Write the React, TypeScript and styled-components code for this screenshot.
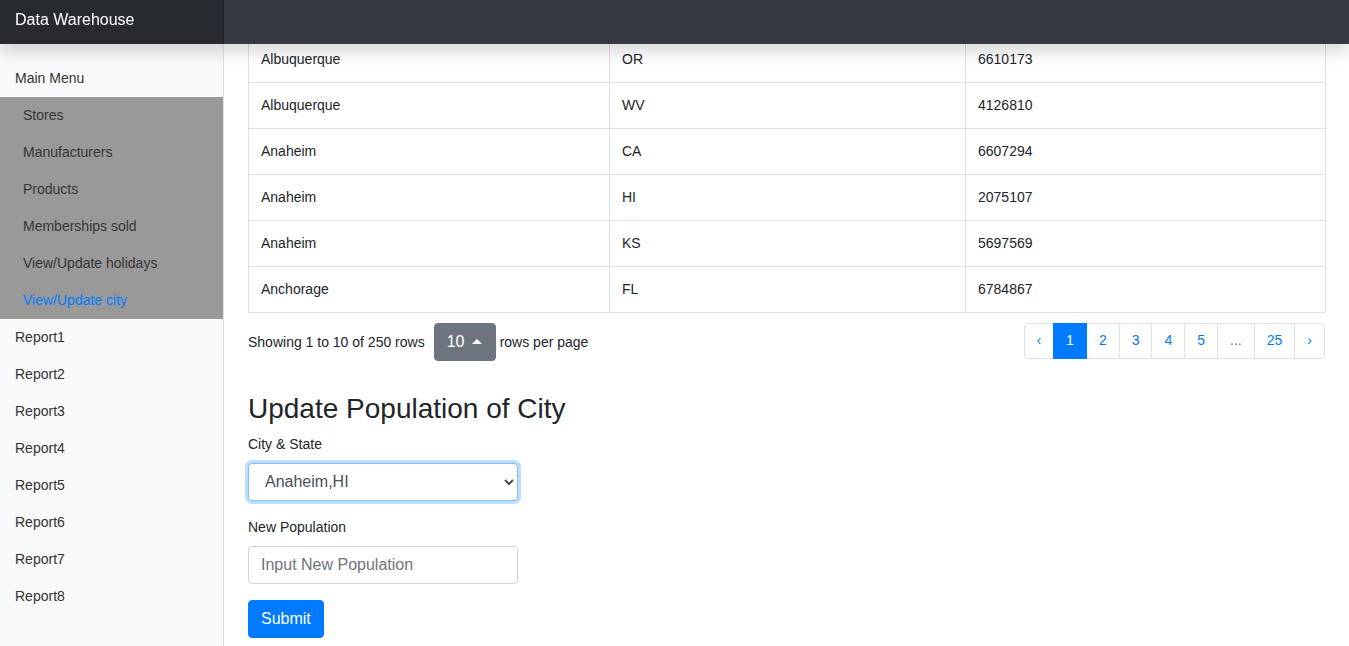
import React from "react";
import styled, { createGlobalStyle } from "styled-components";

const Global = createGlobalStyle`
  html, body { margin: 0; padding: 0; }
  body {
    font-family: "Liberation Sans", Arial, sans-serif;
    font-size: 16px;
    line-height: 1.5;
    color: #212529;
    background: #fff;
    overflow: hidden;
  }
  * { box-sizing: border-box; }
`;

const Page = styled.div`
  display: flex;
  height: 100vh;
  overflow: hidden;
`;

const TopBar = styled.header`
  position: fixed;
  top: 0;
  left: 0;
  right: 0;
  height: 44px;
  display: flex;
  background: #343a40;
  box-shadow: 0 0.5rem 1rem rgba(0, 0, 0, 0.15);
  z-index: 10;
`;

const Brand = styled.div`
  width: 224px;
  height: 100%;
  display: flex;
  align-items: center;
  padding: 0 0 4px 15px;
  color: #fff;
  font-size: 16px;
  background: rgba(0, 0, 0, 0.25);
  box-shadow: inset -1px 0 0 rgba(0, 0, 0, 0.25);
`;

const Sidebar = styled.nav`
  flex: 0 0 224px;
  height: 100vh;
  background: #f8f9fa;
  border-right: 1px solid #dee2e6;
  padding-top: 60px;
  display: flex;
  flex-direction: column;
`;

const MenuItem = styled.div<{ $indent?: boolean; $active?: boolean }>`
  height: 37px;
  display: flex;
  align-items: center;
  padding-left: ${(p) => (p.$indent ? 23 : 15)}px;
  font-size: 14px;
  color: ${(p) => (p.$active ? "#007bff" : p.$indent ? "#353535" : "#333")};
`;

const SubMenu = styled.div`
  background: #999999;
  display: flex;
  flex-direction: column;
`;

const Main = styled.main`
  flex: 1;
  padding: 36px 24px 0 24px;
  min-width: 0;
`;

const Table = styled.table`
  width: 100%;
  border-collapse: collapse;
  font-size: 14px;
  table-layout: fixed;
`;

const Cell = styled.td<{ $w: number }>`
  width: ${(p) => p.$w}px;
  border: 1px solid #dee2e6;
  padding: 12px;
  line-height: 21px;
  color: #212529;
`;

const PagerRow = styled.div`
  margin-top: 10px;
  display: flex;
  align-items: center;
  justify-content: space-between;
  height: 38px;
`;

const Detail = styled.div`
  display: flex;
  align-items: center;
  font-size: 14px;
  line-height: 19px;
`;

const SizeButton = styled.button`
  margin: 0 4px 0 9px;
  height: 38px;
  padding: 0 12px 0 12px;
  width: 62px;
  border: 1px solid #6c757d;
  border-radius: 4px;
  background: #6c757d;
  color: #fff;
  font-family: inherit;
  font-size: 16px;
  display: flex;
  align-items: center;
  gap: 8px;
`;

const Caret = styled.span`
  width: 0;
  height: 0;
  border-left: 5px solid transparent;
  border-right: 5px solid transparent;
  border-bottom: 5px solid #fff;
  margin-bottom: 2px;
`;

const Pagination = styled.ul`
  display: flex;
  list-style: none;
  margin: 0;
  padding: 0;
  align-self: flex-start;
`;

const PageLink = styled.li<{ $active?: boolean; $muted?: boolean }>`
  font-size: 14px;
  line-height: 17.5px;
  padding: 8px 12px;
  margin-left: -1px;
  border: 1px solid ${(p) => (p.$active ? "#007bff" : "#dee2e6")};
  background: ${(p) => (p.$active ? "#007bff" : "#fff")};
  color: ${(p) => (p.$active ? "#fff" : p.$muted ? "#6c757d" : "#007bff")};
  position: relative;
  z-index: ${(p) => (p.$active ? 2 : 1)};
  &:first-child {
    margin-left: 0;
    padding-left: 11px;
    border-radius: 4px 0 0 4px;
  }
  &:last-child {
    border-radius: 0 4px 4px 0;
  }
`;

const Heading = styled.h3`
  margin: 31px 0 8px;
  font-size: 28px;
  font-weight: 500;
  line-height: 1.2;
  color: #212529;
`;

const FormGroup = styled.div`
  margin-bottom: 16px;
  width: 270px;
`;

const Label = styled.label`
  display: block;
  font-size: 14px;
  line-height: 21px;
  margin-bottom: 8px;
`;

const Select = styled.select`
  width: 270px;
  height: 38px;
  padding: 6px 8px 6px 12px;
  font-family: inherit;
  font-size: 16px;
  color: #495057;
  background: #fff;
  border: 1px solid #80bdff;
  border-radius: 4px;
  box-shadow: 0 0 0 3px rgba(0, 123, 255, 0.25);
  outline: none;
`;

const Input = styled.input`
  width: 270px;
  height: 38px;
  padding: 6px 12px;
  font-family: inherit;
  font-size: 16px;
  color: #495057;
  border: 1px solid #ced4da;
  border-radius: 4px;
  outline: none;
  &::placeholder {
    color: #6c757d;
  }
`;

const Submit = styled.button`
  height: 38px;
  padding: 0 12px;
  font-family: inherit;
  font-size: 16px;
  color: #fff;
  background: #007bff;
  border: 1px solid #007bff;
  border-radius: 4px;
`;

const rows: [string, string, string][] = [
  ["Albuquerque", "OR", "6610173"],
  ["Albuquerque", "WV", "4126810"],
  ["Anaheim", "CA", "6607294"],
  ["Anaheim", "HI", "2075107"],
  ["Anaheim", "KS", "5697569"],
  ["Anchorage", "FL", "6784867"],
];

const widths = [361, 356, 360];

const subItems = [
  "Stores",
  "Manufacturers",
  "Products",
  "Memberships sold",
  "View/Update holidays",
  "View/Update city",
];

export default function App() {
  return (
    <>
      <Global />
      <TopBar>
        <Brand>Data Warehouse</Brand>
      </TopBar>
      <Page>
        <Sidebar>
          <MenuItem>Main Menu</MenuItem>
          <SubMenu>
            {subItems.map((s) => (
              <MenuItem key={s} $indent $active={s === "View/Update city"}>
                {s}
              </MenuItem>
            ))}
          </SubMenu>
          {[1, 2, 3, 4, 5, 6, 7, 8].map((n) => (
            <MenuItem key={n}>Report{n}</MenuItem>
          ))}
        </Sidebar>
        <Main>
          <Table>
            <tbody>
              {rows.map((r, i) => (
                <tr key={i}>
                  {r.map((c, j) => (
                    <Cell key={j} $w={widths[j]}>
                      {c}
                    </Cell>
                  ))}
                </tr>
              ))}
            </tbody>
          </Table>
          <PagerRow>
            <Detail>
              Showing 1 to 10 of 250 rows
              <SizeButton>
                10 <Caret />
              </SizeButton>
              rows per page
            </Detail>
            <Pagination>
              <PageLink>‹</PageLink>
              <PageLink $active>1</PageLink>
              <PageLink>2</PageLink>
              <PageLink>3</PageLink>
              <PageLink>4</PageLink>
              <PageLink>5</PageLink>
              <PageLink $muted>...</PageLink>
              <PageLink>25</PageLink>
              <PageLink>›</PageLink>
            </Pagination>
          </PagerRow>
          <Heading>Update Population of City</Heading>
          <FormGroup>
            <Label>City &amp; State</Label>
            <Select defaultValue="Anaheim,HI">
              <option>Anaheim,HI</option>
            </Select>
          </FormGroup>
          <FormGroup>
            <Label>New Population</Label>
            <Input placeholder="Input New Population" />
          </FormGroup>
          <Submit>Submit</Submit>
        </Main>
      </Page>
    </>
  );
}
